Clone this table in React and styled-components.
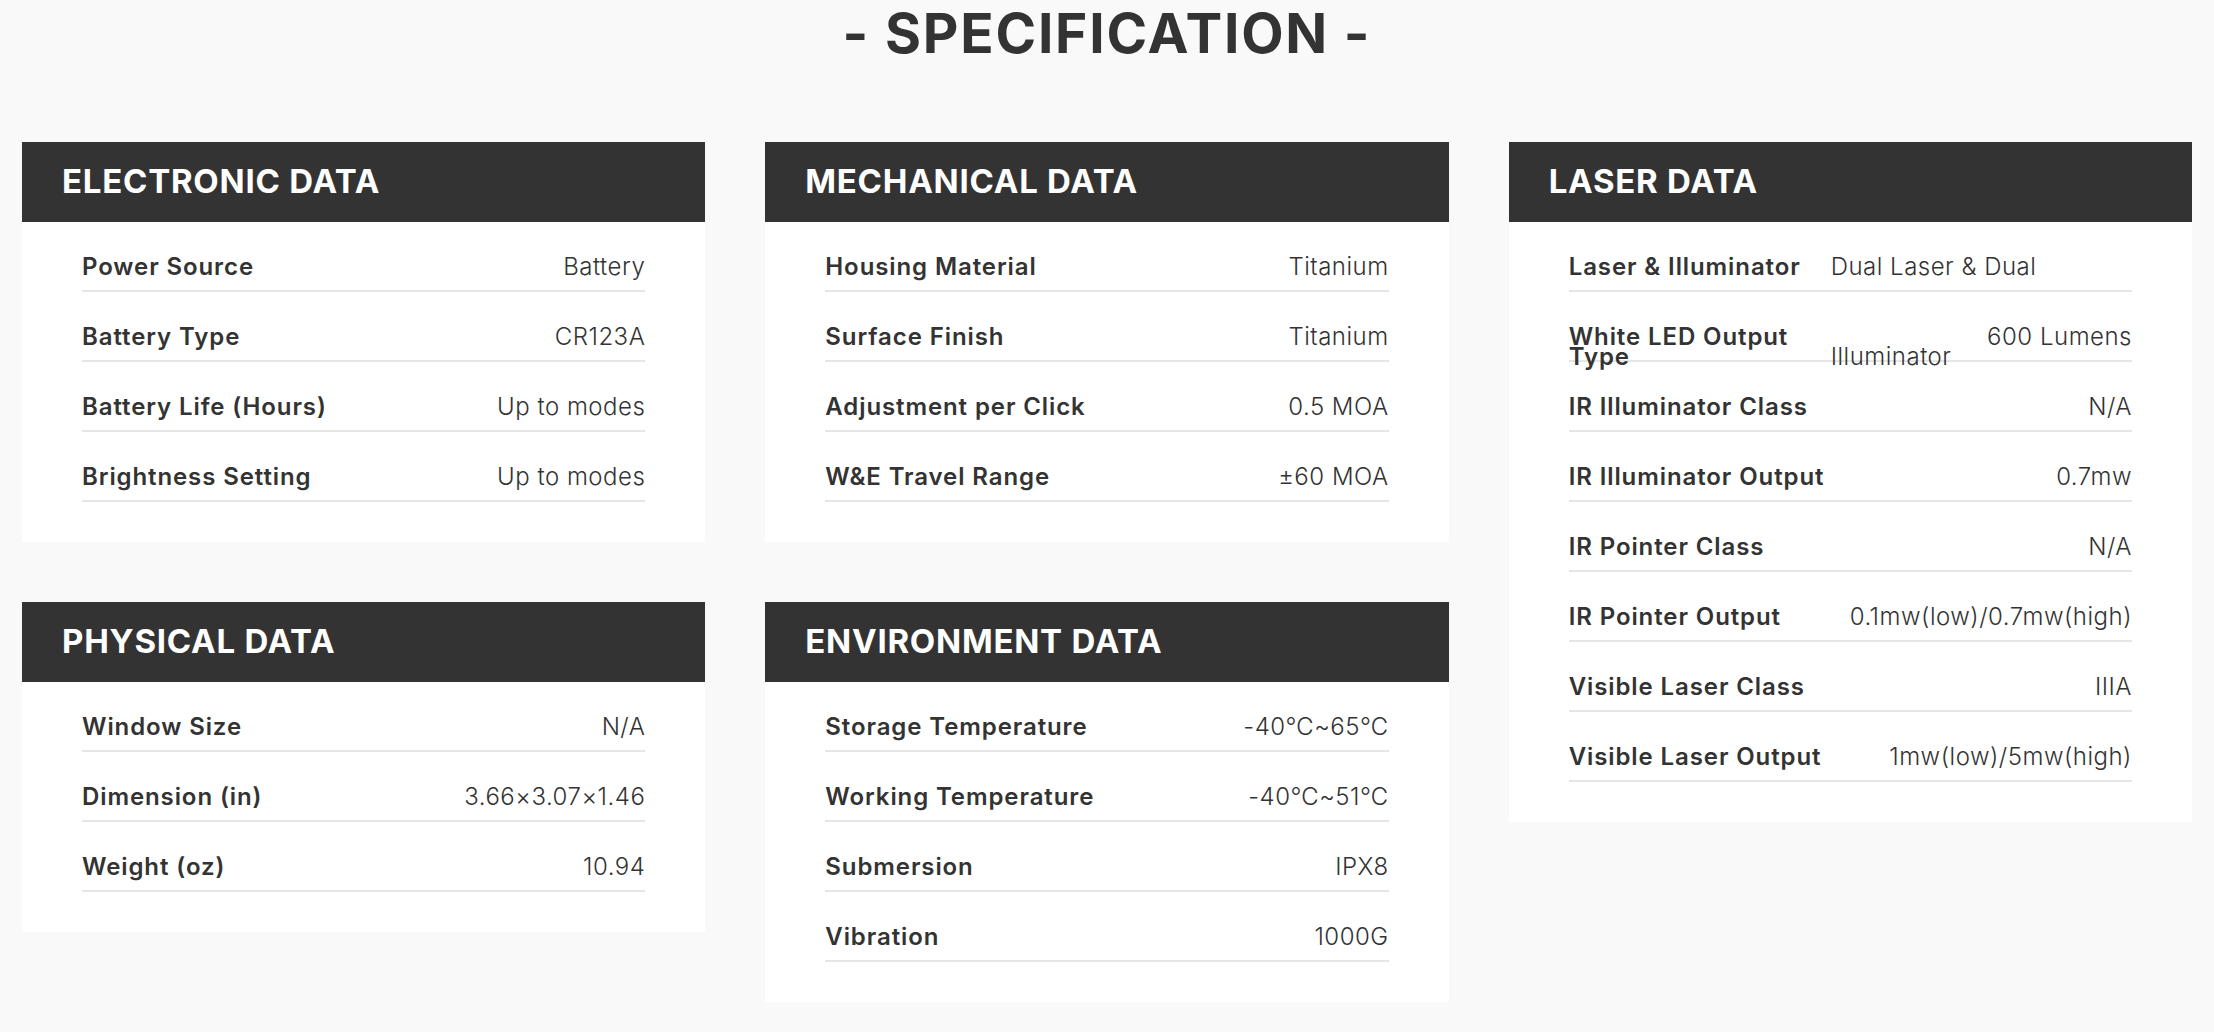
import React from "react";
import styled, { createGlobalStyle } from "styled-components";

const GlobalStyle = createGlobalStyle`
  html, body {
    margin: 0;
    padding: 0;
    background: #f9f9f9;
  }
  body {
    font-family: Inter, "Liberation Sans", sans-serif;
    color: #333333;
  }
  * { box-sizing: border-box; }
`;

const Page = styled.main`
  padding: 6px 22px 40px;
  min-height: 1032px;
`;

const Title = styled.h1`
  margin: 0;
  text-align: center;
  font-family: Inter, "Liberation Sans", sans-serif;
  font-weight: 700;
  font-size: 55px;
  line-height: 55px;
  letter-spacing: 1.8px;
  color: #333333;
`;

const Grid = styled.div`
  margin-top: 81px;
  display: grid;
  grid-template-columns: repeat(3, minmax(0, 1fr));
  column-gap: 60px;
  align-items: start;
`;

const Column = styled.div`
  display: flex;
  flex-direction: column;
  gap: 60px;
  min-width: 0;
`;

const Card = styled.section`
  background: #ffffff;
`;

const CardHeader = styled.h2`
  margin: 0;
  height: 80px;
  display: flex;
  align-items: center;
  padding: 0 0 2px 40px;
  background: #333333;
  color: #ffffff;
  font-weight: 700;
  font-size: 33px;
  letter-spacing: 0.75px;
`;

const CardBody = styled.ul`
  list-style: none;
  margin: 0;
  padding: 0 60px 40px;
`;

const Row = styled.li`
  display: flex;
  justify-content: space-between;
  align-items: flex-start;
  gap: 30px;
  height: 70px;
  border-bottom: 2px solid #e6e6e6;
  font-size: 24px;
  color: #333333;
`;

const Label = styled.span`
  flex-shrink: 0;
  padding-top: 35px;
  line-height: 20px;
  font-weight: 600;
  letter-spacing: 0.9px;
  white-space: nowrap;
`;

const Value = styled.span`
  line-height: 90px;
  font-weight: 300;
  letter-spacing: 0.5px;
  white-space: nowrap;
  min-width: 0;
  text-align: ${(p) => (p.$wrap ? "left" : "right")};
  flex: ${(p) => (p.$wrap ? "1 1 auto" : "0 1 auto")};
`;

const electronic = [
  ["Power Source", "Battery"],
  ["Battery Type", "CR123A"],
  ["Battery Life (Hours)", "Up to modes"],
  ["Brightness Setting", "Up to modes"],
];

const physical = [
  ["Window Size", "N/A"],
  ["Dimension (in)", "3.66×3.07×1.46"],
  ["Weight (oz)", "10.94"],
];

const mechanical = [
  ["Housing Material", "Titanium"],
  ["Surface Finish", "Titanium"],
  ["Adjustment per Click", "0.5 MOA"],
  ["W&E Travel Range", "±60 MOA"],
];

const environment = [
  ["Storage Temperature", "-40℃~65℃"],
  ["Working Temperature", "-40℃~51℃"],
  ["Submersion", "IPX8"],
  ["Vibration", "1000G"],
];

const laser = [
  ["Laser & Illuminator", ["Dual Laser & Dual", "Illuminator"]],
  [["White LED Output", "Type"], "600 Lumens"],
  ["IR Illuminator Class", "N/A"],
  ["IR Illuminator Output", "0.7mw"],
  ["IR Pointer Class", "N/A"],
  ["IR Pointer Output", "0.1mw(low)/0.7mw(high)"],
  ["Visible Laser Class", "IIIA"],
  ["Visible Laser Output", "1mw(low)/5mw(high)"],
];

const lines = (t) =>
  Array.isArray(t)
    ? t.map((s, i) => (
        <React.Fragment key={i}>
          {i > 0 && <br />}
          {s}
        </React.Fragment>
      ))
    : t;

function SpecCard({ title, rows }) {
  return (
    <Card>
      <CardHeader>{title}</CardHeader>
      <CardBody>
        {rows.map(([label, value], i) => (
          <Row key={i}>
            <Label>{lines(label)}</Label>
            <Value $wrap={Array.isArray(value)}>{lines(value)}</Value>
          </Row>
        ))}
      </CardBody>
    </Card>
  );
}

export default function App() {
  return (
    <>
      <GlobalStyle />
      <Page>
        <Title>- SPECIFICATION -</Title>
        <Grid>
          <Column>
            <SpecCard title="ELECTRONIC DATA" rows={electronic} />
            <SpecCard title="PHYSICAL DATA" rows={physical} />
          </Column>
          <Column>
            <SpecCard title="MECHANICAL DATA" rows={mechanical} />
            <SpecCard title="ENVIRONMENT DATA" rows={environment} />
          </Column>
          <Column>
            <SpecCard title="LASER DATA" rows={laser} />
          </Column>
        </Grid>
      </Page>
    </>
  );
}
